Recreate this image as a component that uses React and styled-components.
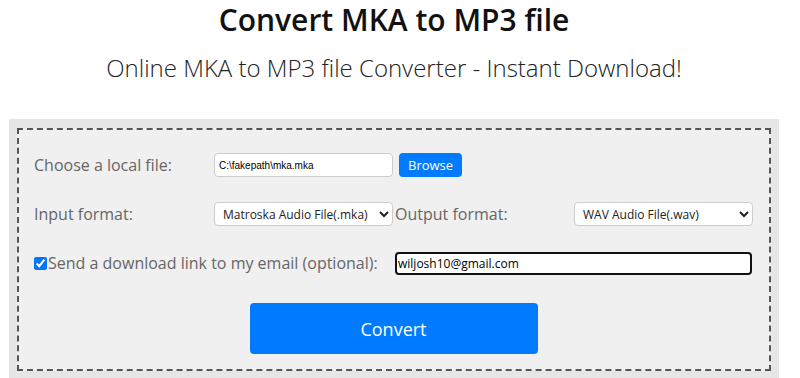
import React from "react";
import styled, { createGlobalStyle } from "styled-components";

const GlobalStyle = createGlobalStyle`
  body {
    margin: 0;
    background: #fff;
    font-family: "Open Sans", "Liberation Sans", sans-serif;
  }
`;

export default function App() {
  return (
    <>
      <GlobalStyle />
      <Page>
        <Title>Convert MKA to MP3 file</Title>
        <Subtitle>Online MKA to MP3 file Converter - Instant Download!</Subtitle>
        <Outer>
          <Panel>
            <Row>
              <Label>Choose a local file:</Label>
              <FileGroup>
                <FileInput type="text" readOnly value="C:\fakepath\mka.mka" />
                <Browse>Browse</Browse>
              </FileGroup>
            </Row>
            <Row>
              <Label>Input format:</Label>
              <Select defaultValue="mka">
                <option value="mka">Matroska Audio File(.mka)</option>
              </Select>
              <Label>Output format:</Label>
              <Select defaultValue="wav">
                <option value="wav">WAV Audio File(.wav)</option>
              </Select>
            </Row>
            <EmailRow>
              <CheckLabel>
                <Check type="checkbox" defaultChecked />
                Send a download link to my email (optional):
              </CheckLabel>
              <Email type="text" defaultValue="wiljosh10@gmail.com" />
            </EmailRow>
            <ButtonRow>
              <Convert>Convert</Convert>
            </ButtonRow>
          </Panel>
        </Outer>
      </Page>
    </>
  );
}

const Page = styled.div`
  width: 788px;
  padding: 0 9px;
  box-sizing: border-box;
`;

const Title = styled.h1`
  margin: 0;
  text-align: center;
  font-size: 30px;
  font-weight: 600;
  line-height: 39px;
  color: #111;
`;

const Subtitle = styled.h2`
  margin: 12px 0 0;
  text-align: center;
  font-size: 24px;
  font-weight: 300;
  line-height: 34px;
  color: #222;
`;

const Outer = styled.div`
  margin-top: 34px;
  background: #e6e6e6;
  padding: 9px 8px 8px;
`;

const Panel = styled.div`
  border: 2px dashed #555;
  background: #f0f0f0;
  padding: 23px 17px 15px 15px;
`;

const Row = styled.div`
  display: grid;
  grid-template-columns: 180px 181px 179px 178px;
  align-items: center;
  height: 24px;
  margin-bottom: 25px;
`;

const Label = styled.span`
  font-size: 16px;
  color: #666;
  white-space: nowrap;
`;

const FileGroup = styled.div`
  display: flex;
  gap: 6px;
  grid-column: span 2;
`;

const FileInput = styled.input`
  width: 179px;
  height: 24px;
  box-sizing: border-box;
  border: 1px solid #ccc;
  border-radius: 4px;
  background: #fff;
  padding: 0 4px;
  font-family: "Liberation Sans", Arial, sans-serif;
  font-size: 10px;
  color: #000;
`;

const Browse = styled.button`
  height: 24px;
  padding: 0 9px;
  border: none;
  border-radius: 4px;
  background: #007bff;
  color: #fff;
  font-family: "Open Sans", sans-serif;
  font-size: 13px;
`;

const Select = styled.select`
  width: 179px;
  height: 24px;
  box-sizing: border-box;
  border: 1px solid #ccc;
  border-radius: 4px;
  background: #fff;
  font-family: "Open Sans", sans-serif;
  font-size: 12px;
  color: #222;
  padding: 0 4px;
`;

const EmailRow = styled.div`
  display: grid;
  grid-template-columns: 361px 357px;
  align-items: center;
  height: 24px;
  margin-top: 3px;
  margin-bottom: 28px;
`;

const CheckLabel = styled.label`
  display: flex;
  align-items: center;
  font-size: 16px;
  color: #666;
  white-space: nowrap;
`;

const Check = styled.input`
  width: 13px;
  height: 13px;
  margin: 0 1px 0 0;
  accent-color: #0075ff;
`;

const Email = styled.input`
  height: 23px;
  box-sizing: border-box;
  border: 2px solid #111;
  border-radius: 4px;
  background: #fff;
  padding: 0 1px;
  font-family: "Open Sans", sans-serif;
  font-size: 12px;
  color: #000;
  outline: none;
`;

const ButtonRow = styled.div`
  display: flex;
  justify-content: center;
  padding-left: 1px;
`;

const Convert = styled.button`
  width: 288px;
  height: 51px;
  border: none;
  border-radius: 4px;
  background: #007bff;
  color: #fff;
  font-family: "Open Sans", sans-serif;
  font-size: 18px;
`;
